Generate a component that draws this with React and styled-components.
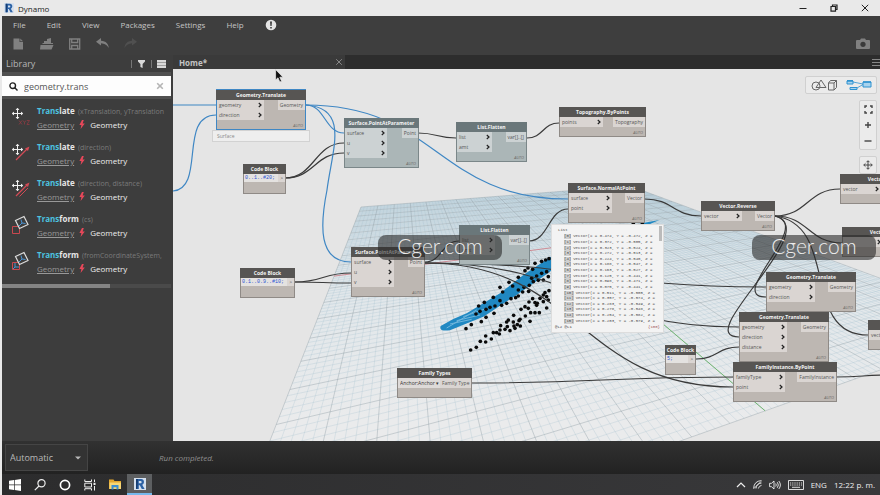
import React, { useState } from "react";
import styled, { createGlobalStyle, css } from "styled-components";

const GlobalStyle = createGlobalStyle`
  * {
    box-sizing: border-box;
  }
  body {
    margin: 0;
    background: #e9e9e9;
    font-family: "Open Sans", "Noto Sans", sans-serif;
  }
  button, input, select {
    font-family: inherit;
    border: 0;
    margin: 0;
    padding: 0;
    background: none;
    color: inherit;
    outline: none;
  }
`;

const Window = styled.div`
  position: relative;
  display: flex;
  flex-direction: column;
  height: 100vh;
  padding-left: 2px;
  overflow: hidden;
  background: #e9e9e9;
`;

const TitleBar = styled.header`
  display: flex;
  align-items: center;
  flex: none;
  height: 16px;
  padding-left: 2px;
  gap: 4px;
  font-size: 8px;
  color: #222;
`;

const WindowButtons = styled.div`
  display: flex;
  margin-left: auto;
`;

const WindowButton = styled.button`
  display: flex;
  align-items: center;
  justify-content: center;
  width: 31px;
  height: 16px;
  color: #222;
`;

const MenuBar = styled.nav`
  display: flex;
  align-items: center;
  flex: none;
  height: 17px;
  padding-left: 11px;
  gap: 21px;
  background: #3e3e3e;
`;

const MenuButton = styled.button`
  display: flex;
  font-size: 8px;
  line-height: 12px;
  color: #c4c4c4;
`;

const ToolBar = styled.div`
  display: flex;
  align-items: center;
  flex: none;
  height: 22px;
  padding: 0 10px;
  gap: 14px;
  background: #3e3e3e;
`;

const ToolButton = styled.button`
  display: flex;
  width: 14px;
  color: ${(p) => (p.$dim ? "#505050" : "#808080")};
  margin-left: ${(p) => (p.$end ? "auto" : "0")};
`;

const Main = styled.main`
  display: flex;
  flex: 1;
  min-height: 0;
`;

const Sidebar = styled.aside`
  flex: none;
  width: 171px;
  padding-right: 2px;
  background: #3d3d3d;
  overflow: hidden;
`;

const LibraryHead = styled.div`
  display: flex;
  align-items: center;
  height: 17px;
  padding: 0 5px 0 4px;
  font-size: 9px;
  color: #b5b5b5;
`;

const LibraryTools = styled.div`
  display: flex;
  align-items: center;
  gap: 5px;
  margin-left: auto;
  color: #d8d8d8;

  button {
    display: flex;
  }
`;

const Divider = styled.span`
  width: 1px;
  height: 8px;
  background: #777;
`;

const SearchBox = styled.label`
  display: flex;
  align-items: center;
  height: 27px;
  padding: 0 7px;
  gap: 6px;
  border-top: 4px solid #505050;
  border-bottom: 3px solid #505050;
  background: #fdfdfd;

  input {
    flex: 1;
    min-width: 0;
    font-size: 9px;
    color: #555;
  }
`;

const Results = styled.ul`
  margin: 0;
  padding: 5px 0 0;
  list-style: none;
`;

const Result = styled.li`
  display: flex;
  height: 36px;
  padding-left: 8px;
  gap: 7px;
  white-space: nowrap;

  svg {
    flex: none;
    margin-top: 3px;
  }
`;

const ResultName = styled.div`
  font-size: 8px;
  line-height: 13px;
  font-weight: 700;
  color: #e6e6e6;

  mark {
    background: none;
    color: #4cc3e0;
  }
  small {
    margin-left: 1px;
    font-size: 7px;
    font-weight: 400;
    color: #7a7a7a;
  }
`;

const ResultPath = styled.div`
  display: flex;
  align-items: center;
  gap: 5px;
  font-size: 8px;
  line-height: 13px;
  color: #eee;

  a {
    color: #999;
  }
  svg {
    margin: 0;
  }
`;

const ScrollTrack = styled.div`
  height: 4px;
  background: #4a4a4a;
`;

const ScrollThumb = styled.div`
  width: 64%;
  height: 4px;
  background: #848484;
`;

const Workspace = styled.section`
  display: flex;
  flex-direction: column;
  flex: 1;
  min-width: 0;
`;

const TabBar = styled.div`
  display: flex;
  align-items: center;
  justify-content: space-between;
  flex: none;
  height: 14px;
  background: #2d2d2d;
  color: #888;
`;

const Tab = styled.div`
  display: flex;
  align-items: center;
  justify-content: space-between;
  width: 172px;
  height: 14px;
  padding: 0 2px 0 6px;
  background: #3a3a3a;
  font-size: 8px;
  font-weight: 700;
  color: #c4c4c4;

  button {
    display: flex;
    color: #888;
  }
`;

const Canvas = styled.div`
  position: relative;
  flex: 1;
  overflow: hidden;
  background: #e5e5e5;
`;

/* panned graph space, nodes and wires share its coordinates */
const Graph = styled.div`
  position: absolute;
  left: -173px;
  top: -69px;
`;

const Scene = styled.svg`
  position: absolute;
  left: 0;
  top: 0;
  overflow: visible;
`;

const NodeBox = styled.article`
  position: absolute;
  left: ${(p) => p.$x}px;
  top: ${(p) => p.$y}px;
  width: ${(p) => p.$w}px;
  font-size: 5px;
  background: #bdb7b2;
  border: 1px solid #8f8a86;
  border-top: 0;
  color: #555;
  --head: #575553;
  --port: #dad5d2;
  ${(p) =>
    p.$kind === "frozen" &&
    css`
      background: #abb6b7;
      border-color: #7b8789;
      --head: #6a777a;
      --port: #ccd2d3;
    `}
  ${(p) =>
    p.$kind === "selected" &&
    css`
      border-color: #3f87c4;
      box-shadow: 0 -1px 0 #3f87c4;
    `}
`;

const NodeTitle = styled.h3`
  margin: 0 -1px;
  height: 10px;
  font-size: 5px;
  line-height: 10px;
  font-weight: 700;
  text-align: center;
  white-space: nowrap;
  background: var(--head);
  color: #f4f4f4;
`;

const NodeBody = styled.div`
  display: flex;
  justify-content: space-between;
  align-items: flex-start;
`;

const Inputs = styled.div`
  width: ${(p) => p.$w}px;
  flex: none;
  background: var(--port);
`;

const Port = styled.div`
  display: flex;
  align-items: center;
  justify-content: space-between;
  height: ${(p) => (p.$code ? 8 : 10)}px;
  padding: 0 2px;
  line-height: 7px;
  white-space: nowrap;
  background: var(--port);
`;

const NodeFoot = styled.div`
  height: ${(p) => (p.$tall ? 11 : 9)}px;
  padding: 2px 2px 0;
  font-size: 4px;
  line-height: 7px;
  font-style: italic;
  text-align: right;
  color: #6e6a67;
`;

const Code = styled.code`
  flex: 1;
  padding-left: 1px;
  font-family: "Liberation Mono", monospace;
  font-size: 5px;
  line-height: 8px;
  white-space: nowrap;
  background: #e4e2e0;
  color: #2c55d4;
`;

const TypeSelect = styled.select`
  appearance: none;
  height: 10px;
  width: 43px;
  padding-left: 2px;
  font-size: 5px;
  color: #333;
  background: #dedad8;
`;

const NodeHint = styled.div`
  position: absolute;
  left: 212px;
  top: 130px;
  width: 98px;
  height: 12px;
  padding-left: 4px;
  border: 1px solid #d2d2d2;
  background: #eee;
  font-size: 5px;
  line-height: 10px;
  color: #888;
`;

const Preview = styled.div`
  position: absolute;
  left: 551px;
  top: 224px;
  width: 113px;
  padding: 2px 6px 1px;
  background: #f3f3f3;
  border: 1px solid #ddd;
  font-family: "Liberation Mono", monospace;
  font-size: 4px;
  line-height: 7px;
  color: #4a4a4a;

  &::after {
    content: "";
    position: absolute;
    right: 1px;
    top: 1px;
    width: 3px;
    height: 15px;
    background: #bbb;
  }
`;

const PreviewRows = styled.ol`
  display: grid;
  grid-auto-rows: 1fr;
  height: 90px;
  margin: 0;
  padding: 0 0 0 6px;
  list-style: none;
`;

const PreviewRow = styled.li`
  display: flex;
  align-items: center;
  gap: 2px;
  line-height: 5px;
  white-space: nowrap;

  b {
    font-weight: 400;
    background: #cfcfcf;
  }
`;

const PreviewFoot = styled.div`
  display: flex;
  justify-content: space-between;
  margin: 0 -3px;
  color: #333;

  span:last-child {
    color: #9b5555;
  }
`;

const ViewControls = styled.div`
  position: absolute;
  top: 7px;
  right: 3px;
  display: flex;
  flex-direction: column;
  align-items: flex-end;
  gap: 6px;
`;

const ControlGroup = styled.div`
  display: flex;
  flex-direction: ${(p) => (p.$column ? "column" : "row")};
  background: #ebebeb;
  border: 1px solid #d0d0d0;
  border-radius: 2px;
`;

const ControlButton = styled.button`
  display: flex;
  align-items: center;
  justify-content: center;
  width: ${(p) => (p.$wide ? 35 : 16)}px;
  height: 16px;
  color: #555;

  & + & {
    border-left: ${(p) => (p.$wide ? "1px solid #d0d0d0" : "0")};
  }
`;

const RunBar = styled.footer`
  display: flex;
  align-items: center;
  flex: none;
  height: 33px;
  padding: 0 3px;
  gap: 71px;
  background: linear-gradient(#313131, #222);
`;

const RunMode = styled.label`
  position: relative;
  display: flex;
  align-items: center;

  select {
    appearance: none;
    width: 83px;
    height: 27px;
    padding-left: 4px;
    border: 1px solid #454545;
    background: #333;
    font-size: 9px;
    color: #b8b8b8;
  }
  svg {
    position: absolute;
    right: 7px;
    pointer-events: none;
  }
`;

const RunStatus = styled.output`
  font-size: 8px;
  font-style: italic;
  color: #8f8f8f;
`;

const TaskBar = styled.div`
  display: flex;
  align-items: center;
  justify-content: space-between;
  flex: none;
  height: 21px;
  background: linear-gradient(90deg, #2c2c2d, #39393b);
  color: #eee;
`;

const TaskButtons = styled.div`
  display: flex;
`;

const TaskButton = styled.button`
  display: flex;
  align-items: center;
  justify-content: center;
  width: 25px;
  height: 21px;
  ${(p) =>
    p.$active &&
    css`
      background: #5d5f61;
      border-bottom: 2px solid #76b9ed;
    `}
`;

const Tray = styled.div`
  display: flex;
  align-items: center;
  gap: 7px;
  padding-right: 5px;
  font-size: 8px;
  white-space: nowrap;
`;

const Watermark = styled.div`
  position: absolute;
  top: 235px;
  ${(p) => (p.$right ? "right: 4px;" : "left: 378px;")}
  width: 124px;
  height: 25px;
  border-radius: 8px;
  background: rgba(40, 40, 40, 0.6);
  font-family: Lato, sans-serif;
  font-size: 21px;
  font-weight: 300;
  line-height: 22px;
  text-align: center;
  color: #ececec;
`;

const Pointer = styled.svg`
  position: absolute;
  left: 275px;
  top: 69px;
`;

/* ground plane: unit square projected onto four corners */
const project = (u, v) => {
  const [x0, y0, x1, y1, x2, y2, x3, y3] = [361, 207, 630, 186, 1007, 325, 204, 610];
  const sx = x0 - x1 + x2 - x3;
  const sy = y0 - y1 + y2 - y3;
  const den = (x1 - x2) * (y3 - y2) - (x3 - x2) * (y1 - y2);
  const g = (sx * (y3 - y2) - (x3 - x2) * sy) / den;
  const h = ((x1 - x2) * sy - sx * (y1 - y2)) / den;
  const w = g * u + h * v + 1;
  const x = ((x1 - x0 + g * x1) * u + (x3 - x0 + h * x3) * v + x0) / w;
  const y = ((y1 - y0 + g * y1) * u + (y3 - y0 + h * y3) * v + y0) / w;
  return `${x.toFixed(1)} ${y.toFixed(1)}`;
};

const gridPath = (count, skip) => {
  let d = "";
  for (let i = 0; i <= count; i++) {
    if (skip && i % skip === 0) continue;
    const t = i / count;
    d += `M${project(t, 0)}L${project(t, 1)}M${project(0, t)}L${project(1, t)}`;
  }
  return d;
};

const DOTS = [
  236, 318, 253, 307, 280, 292, 308, 276, 300, 262, 327, 247, 338, 258, 355, 232, 375, 212, 384,
  204, 398, 208, 405, 190, 425, 184, 437, 180, 447, 176, 198, 386, 214, 374, 244, 365, 258, 352,
  282, 340, 228, 342, 240, 334, 258, 328, 305, 316, 320, 310, 333, 296, 347, 293, 355, 288, 355,
  270, 368, 276, 386, 274, 372, 262, 388, 256, 400, 245, 415, 241, 430, 240, 445, 230, 440, 215,
  425, 220, 410, 228, 395, 235, 285, 318, 270, 322, 300, 302, 212, 450, 229, 442, 241, 424, 257,
  426, 257, 408, 274, 417, 280, 398, 290, 398, 298, 402, 300, 390, 302, 377, 315, 388, 322, 380,
  330, 392, 320, 366, 325, 360, 342, 378, 340, 366, 341, 346, 345, 385, 352, 374, 357, 362, 361,
  378, 360, 358, 363, 328, 376, 348, 390, 364, 375, 320, 385, 325, 387, 306, 392, 338, 405, 338,
  418, 338, 410, 316, 405, 308, 398, 296, 420, 295, 412, 310, 430, 305, 440, 324, 440, 290, 430,
  285, 445, 300, 435, 278, 447, 272, 700, 71, 727, 69,
];

const wire = (x1, y1, x2, y2) => {
  const m = (x1 + x2) / 2;
  return `M${x1} ${y1}C${m} ${y1} ${m} ${y2} ${x2} ${y2}`;
};

const BLUE_WIRES = [
  "M173 105H216",
  "M216 115C178 115 206 188 173 191",
  wire(306, 105, 344, 133),
  "M306 105C350 108 332 150 327 190C320 225 318 262 351 262",
  wire(306, 105, 568, 199),
];

const WIRES = [
  wire(285, 178, 344, 143),
  wire(285, 178, 344, 153),
  wire(418, 133, 456, 138),
  wire(527, 138, 559, 123),
  wire(295, 282, 351, 273),
  wire(295, 282, 351, 283),
  wire(425, 262, 459, 241),
  wire(425, 263, 766, 287),
  wire(425, 263, 740, 327),
  wire(425, 263, 733, 387),
  wire(529, 241, 568, 209),
  wire(645, 199, 701, 216),
  wire(775, 216, 840, 189),
  wire(775, 216, 842, 243),
  "M775 216C815 225 725 297 766 297",
  "M775 216C825 230 690 337 739 337",
  "M775 216C840 225 800 335 868 335",
  wire(471, 383, 733, 377),
  wire(836, 377, 890, 375),
  wire(696, 359, 739, 347),
];

const NODES = [
  { title: "Geometry.Translate", x: 216, y: 90, w: 90, inW: 47, ins: ["geometry", "direction"], out: "Geometry", kind: "selected" },
  { title: "Surface.PointAtParameter", x: 344, y: 118, w: 75, inW: 42, ins: ["surface", "u", "v"], out: "Point", kind: "frozen" },
  { title: "List.Flatten", x: 456, y: 122, w: 71, inW: 35, ins: ["list", "amt"], out: "var[]..[]", kind: "frozen" },
  { title: "Topography.ByPoints", x: 559, y: 107, w: 87, inW: 43, ins: ["points"], out: "Topography" },
  { title: "Surface.NormalAtPoint", x: 568, y: 183, w: 77, inW: 43, ins: ["surface", "point"], out: "Vector" },
  { title: "Vector.Reverse", x: 701, y: 201, w: 74, inW: 40, ins: ["vector"], out: "Vector" },
  { title: "Vector.Scale", x: 840, y: 174, w: 86, inW: 40, ins: ["vector"], out: "" },
  { title: "Vector.Scale", x: 842, y: 227, w: 86, inW: 40, ins: [""], out: "" },
  { title: "List.Flatten", x: 459, y: 225, w: 71, inW: 35, ins: ["list", "amt"], out: "var[]..[]", kind: "frozen" },
  { title: "Surface.PointAtParameter", x: 351, y: 247, w: 74, inW: 42, ins: ["surface", "u", "v"], out: "Point" },
  { title: "Geometry.Translate", x: 766, y: 272, w: 90, inW: 48, ins: ["geometry", "direction"], out: "Geometry" },
  { title: "Geometry.Translate", x: 739, y: 312, w: 90, inW: 47, ins: ["geometry", "direction", "distance"], out: "Geometry" },
  { title: "FamilyInstance.ByPoint", x: 733, y: 362, w: 104, inW: 51, ins: ["familyType", "point"], out: "FamilyInstance" },
  { title: "", x: 868, y: 320, w: 78, inW: 40, ins: ["vector"], out: "" },
];

const CODE_BLOCKS = [
  { x: 243, y: 164, w: 43, code: "0..1..#20;" },
  { x: 240, y: 268, w: 55, code: "0.1..0.9..#10;" },
  { x: 665, y: 345, w: 31, code: "5;" },
];

const VECTORS = [
  ["0.474", "0.472"],
  ["0.372", "0.505"],
  ["0.323", "0.524"],
  ["0.272", "0.513"],
  ["0.224", "0.540"],
  ["0.188", "0.547"],
  ["0.163", "0.527"],
  ["0.125", "0.441"],
  ["0.098", "0.471"],
  ["0.075", "0.441"],
  ["0.511", "0.505"],
  ["0.357", "0.574"],
  ["0.283", "0.549"],
  ["0.278", "0.548"],
  ["0.254", "0.582"],
  ["0.203", "0.579"],
];

const RESULTS = [
  { rest: "late", args: "(xTranslation, yTranslation", icon: "xyz" },
  { rest: "late", args: "(direction)", icon: "arrow" },
  { rest: "late", args: "(direction, distance)", icon: "arrows" },
  { rest: "form", args: "(cs)", icon: "cs" },
  { rest: "form", args: "(fromCoordinateSystem,", icon: "from" },
];

const Chevron = () => (
  <svg width="4" height="6" viewBox="0 0 4 6">
    <path d="M.8 1L3 3L.8 5" fill="none" stroke="#222" strokeWidth="1.2" />
  </svg>
);

const RevitLogo = ({ size }) => (
  <svg width={size} height={size} viewBox="0 0 12 12">
    <path d="M0 0H12V12H0z" fill="#d5e0ee" />
    <path
      d="M2 1H7.2C10.6 1 10.8 6 8.2 6.8L10.6 11H7.8L5.8 7.2H4.8V11H2zM4.8 3V5.3H6.6C8 5.3 8 3 6.6 3z"
      fill="#2c62a5"
      fillRule="evenodd"
    />
    <path d="M2 1H4L3.4 11H2z" fill="#163d73" />
  </svg>
);

const ResultIcon = ({ kind }) => {
  if (kind === "cs" || kind === "from") {
    return (
      <svg width="20" height="20" viewBox="0 0 20 20" fill="none">
        <path d="M2.5 11.5H9.5V18.5H2.5z" stroke="#c9484f" />
        {kind === "from" && <path d="M5 12V16H9M5 16L3 18" stroke="#4a94d4" />}
        <path d="M5.5 5.5L14 1.5L18 9.5L9.5 13.5z" fill="#3d3d3d" stroke="#ddd" strokeWidth="1.2" />
        <path d="M11 4.5L12 8L15.5 8.5M12 8L9 11" stroke="#4a94d4" />
      </svg>
    );
  }
  return (
    <svg width="20" height="20" viewBox="0 0 20 20" fill="none">
      {kind === "xyz" && (
        <path
          d="M9 13.5L12 17.5M12 13.5L9 17.5M13 13.5L14.5 15.5L16 13.5M14.5 15.5V17.5M17 13.5H19.5L17 17.5H19.5"
          stroke="#8e3b42"
          strokeWidth=".8"
        />
      )}
      {kind !== "xyz" && (
        <>
          <path d="M6 17L17 6" stroke="#d24a55" strokeWidth="1.2" />
          <path d="M15 5.5L19.5 3.5L18 8z" fill="#d24a55" />
        </>
      )}
      {kind === "arrows" && <path d="M9.5 17.5L18 9" stroke="#d24a55" />}
      <path
        d="M7.5 1.5V11.5M2.5 6.5H12.5M6 3L7.5 1.2L9 3M6 10L7.5 11.8L9 10M4 5L2.2 6.5L4 8M11 5L12.8 6.5L11 8"
        stroke="#f0f0f0"
      />
    </svg>
  );
};

const Bolt = () => (
  <svg width="6" height="9" viewBox="0 0 6 9">
    <path d="M3 0L.4 5H2.4L1.6 9L5.8 3.6H3.6L4.8 0z" fill="#e8485a" />
  </svg>
);

const Node = ({ title, x, y, w, inW, ins, out, kind }) => (
  <NodeBox $x={x} $y={y} $w={w} $kind={kind}>
    <NodeTitle>{title}</NodeTitle>
    <NodeBody>
      <Inputs $w={inW}>
        {ins.map((name, i) => (
          <Port key={i}>
            <span>{name}</span>
            <Chevron />
          </Port>
        ))}
      </Inputs>
      {out && <Port>{out}</Port>}
    </NodeBody>
    <NodeFoot>{x < 840 && "AUTO"}</NodeFoot>
  </NodeBox>
);

const CodeBlock = ({ x, y, w, code }) => (
  <NodeBox $x={x} $y={y} $w={w}>
    <NodeTitle>Code Block</NodeTitle>
    <NodeBody>
      <Code>
        {code}
      </Code>
      <Port $code>&gt;</Port>
    </NodeBody>
    <NodeFoot $tall />
  </NodeBox>
);

const Ground = () => (
  <>
    <defs>
      <linearGradient id="ground" gradientUnits="userSpaceOnUse" x1="0" y1="186" x2="0" y2="420">
        <stop offset="0" stopColor="#cddce4" />
        <stop offset=".35" stopColor="#dfe6ea" />
        <stop offset="1" stopColor="#eaebec" />
      </linearGradient>
    </defs>
    <path d={`M${project(0, 0)}L${project(1, 0)}L${project(1, 1)}L${project(0, 1)}z`} fill="url(#ground)" />
    <g fill="none">
      <path d={gridPath(100, 5)} stroke="#a9c2d0" strokeWidth=".5" opacity=".6" />
      <path d={gridPath(20)} stroke="#8b9aa3" strokeWidth=".6" opacity=".65" />
      <path d={`M${project(0, 0.5)}L${project(0.5, 0.5)}`} stroke="#dd6a75" strokeWidth=".6" />
      <path d={`M${project(0.5, 0.5)}L${project(0.5, 1)}`} stroke="#5db35d" strokeWidth=".8" />
    </g>
  </>
);

const Surface = () => (
  <g transform="translate(400 200) scale(.3333)">
    <path d="M122 378Q160 355 200 340L300 280L370 225L450 172L540 130L450 215L350 285L250 350L150 391Q115 395 122 378z" fill="#2088c2" />
    <path d="M140 384L230 330M150 372L215 358M170 362L240 345M190 350L260 325" stroke="#6fb6dc" strokeWidth="3" />
    <path d="M690 80L725 70L778 60L745 74z" fill="#2088c2" />
    {DOTS.map((v, i) => i % 2 === 0 && <circle key={i} cx={v} cy={DOTS[i + 1]} r="5.5" fill="#0a0a0a" />)}
  </g>
);

const ListPreview = () => (
  <Preview>
    <div>List</div>
    <PreviewRows>
      {VECTORS.map(([x, y], i) => (
        <PreviewRow key={i}>
          <b>[{i}]</b>
          <span>
            Vector(X = {x}, Y = -{y}, Z =
          </span>
        </PreviewRow>
      ))}
    </PreviewRows>
    <PreviewFoot>
      <span>@L2 @L1</span>
      <span>{"{100}"}</span>
    </PreviewFoot>
  </Preview>
);

const Library = () => {
  const [query, setQuery] = useState("geometry.trans");

  return (
    <Sidebar>
      <LibraryHead>
        Library
        <LibraryTools>
          <Divider />
          <button aria-label="Filter">
            <svg width="9" height="8" viewBox="0 0 9 8">
              <path d="M1 0H8V1.5L5.6 4V8L3.4 7V4L1 1.5z" fill="currentColor" />
            </svg>
          </button>
          <Divider />
          <button aria-label="View">
            <svg width="9" height="8" viewBox="0 0 9 8">
              <path d="M0 0H9V8H0z" fill="currentColor" />
              <path d="M0 2.5H9M0 5.5H9" stroke="#777" strokeWidth=".6" />
            </svg>
          </button>
        </LibraryTools>
      </LibraryHead>
      <SearchBox>
        <svg width="9" height="9" viewBox="0 0 9 9" fill="none" stroke="#222" strokeWidth="1.4">
          <circle cx="3.7" cy="3.7" r="2.8" />
          <path d="M5.8 5.8L8.5 8.5" />
        </svg>
        <input aria-label="Search" value={query} onChange={(e) => setQuery(e.target.value)} />
        <svg width="8" height="8" viewBox="0 0 8 8" stroke="#b4b4b4" strokeWidth="1.6">
          <path d="M1.2 1.2L6.8 6.8M6.8 1.2L1.2 6.8" />
        </svg>
      </SearchBox>
      <Results>
        {RESULTS.map((r) => (
          <Result key={r.args}>
            <ResultIcon kind={r.icon} />
            <div>
              <ResultName>
                <mark>Trans</mark>
                {r.rest} <small>{r.args}</small>
              </ResultName>
              <ResultPath>
                <a href="#geometry">Geometry</a>
                <Bolt />
                <span>Geometry</span>
              </ResultPath>
            </div>
          </Result>
        ))}
      </Results>
      <ScrollTrack>
        <ScrollThumb />
      </ScrollTrack>
    </Sidebar>
  );
};

const GraphCanvas = () => (
  <Canvas>
    <Graph>
      <Scene width="880" height="495">
        <Ground />
        <Surface />
        <g fill="none" strokeWidth="1.2">
          {WIRES.map((d) => (
            <path key={d} d={d} stroke="#3a3a3a" />
          ))}
          {BLUE_WIRES.map((d) => (
            <path key={d} d={d} stroke="#3f87c4" />
          ))}
        </g>
      </Scene>
      {NODES.map((n, i) => (
        <Node key={i} {...n} />
      ))}
      {CODE_BLOCKS.map((n) => (
        <CodeBlock key={n.code} {...n} />
      ))}
      <NodeBox $x={397} $y={368} $w={75}>
        <NodeTitle>Family Types</NodeTitle>
        <NodeBody>
          <TypeSelect aria-label="Family type">
            <option>Anchor:Anchor ▾</option>
          </TypeSelect>
          <Port>Family Type</Port>
        </NodeBody>
        <NodeFoot />
      </NodeBox>
      <NodeHint>Surface</NodeHint>
      <ListPreview />
    </Graph>
    <ViewControls>
      <ControlGroup>
        <ControlButton $wide aria-label="3D view">
          <svg width="26" height="12" viewBox="0 0 26 12" fill="none" stroke="#666">
            <circle cx="5" cy="7" r="4" />
            <path d="M10 1L15 8.5H5zM17.5 4H23V11H17.5zM17.5 4L19.5 1.5H25.5V8.5L23 11M23 4L25.5 1.5" />
          </svg>
        </ControlButton>
        <ControlButton $wide aria-label="Graph view">
          <svg width="26" height="12" viewBox="0 0 26 12" fill="none" stroke="#2f92d0">
            <path d="M1 2H7V5H1zM4 8.5H11V10.5H4zM17 3H25V8H17z" fill="#a8d3ee" />
            <path d="M1 1.8H7M17 3H25" strokeWidth="1.6" />
            <path d="M7 3L17 5M11 9L17 5.5" strokeWidth=".8" />
          </svg>
        </ControlButton>
      </ControlGroup>
      <ControlGroup $column>
        <ControlButton aria-label="Fit">
          <svg width="9" height="9" viewBox="0 0 9 9" fill="none" stroke="#444" strokeWidth="1.4">
            <path d="M1 3V1H3M6 1H8V3M8 6V8H6M3 8H1V6" />
          </svg>
        </ControlButton>
        <ControlButton aria-label="Zoom in">
          <svg width="8" height="8" viewBox="0 0 8 8" stroke="#444" strokeWidth="1.4">
            <path d="M1 4H7M4 1V7" />
          </svg>
        </ControlButton>
        <ControlButton aria-label="Zoom out">
          <svg width="8" height="8" viewBox="0 0 8 8" stroke="#444" strokeWidth="1.4">
            <path d="M.5 4H7.5" />
          </svg>
        </ControlButton>
      </ControlGroup>
      <ControlGroup>
        <ControlButton aria-label="Pan">
          <svg width="10" height="10" viewBox="0 0 10 10" fill="none" stroke="#444">
            <path d="M5 1V9M1 5H9M3.5 2.2L5 .7L6.5 2.2M3.5 7.8L5 9.3L6.5 7.8M2.2 3.5L.7 5L2.2 6.5M7.8 3.5L9.3 5L7.8 6.5" />
          </svg>
        </ControlButton>
      </ControlGroup>
    </ViewControls>
  </Canvas>
);

const App = () => {
  const menus = ["File", "Edit", "View", "Packages", "Settings", "Help"];

  return (
    <Window>
      <GlobalStyle />
      <TitleBar>
        <RevitLogo size={10} />
        Dynamo
        <WindowButtons>
          <WindowButton aria-label="Minimize">
            <svg width="8" height="8" viewBox="0 0 8 8" stroke="currentColor">
              <path d="M.5 4.5H7.5" />
            </svg>
          </WindowButton>
          <WindowButton aria-label="Restore">
            <svg width="8" height="8" viewBox="0 0 8 8" fill="none" stroke="currentColor" strokeWidth="1.2">
              <path d="M1 2.5H5.5V7.2H1zM2.5 2.5V1H7V5.5H5.5" />
            </svg>
          </WindowButton>
          <WindowButton aria-label="Close">
            <svg width="8" height="8" viewBox="0 0 8 8" stroke="currentColor">
              <path d="M.8 .8L7.2 7.2M7.2 .8L.8 7.2" />
            </svg>
          </WindowButton>
        </WindowButtons>
      </TitleBar>
      <MenuBar>
        {menus.map((name) => (
          <MenuButton key={name}>{name}</MenuButton>
        ))}
        <MenuButton aria-label="Notifications">
          <svg width="12" height="12" viewBox="0 0 12 12">
            <circle cx="6" cy="6" r="5.3" fill="#e4e4e4" />
            <path d="M5 2.5H7L6.6 7H5.4zM5.2 8H6.8V9.5H5.2z" fill="#3e3e3e" />
          </svg>
        </MenuButton>
      </MenuBar>
      <ToolBar>
        <ToolButton aria-label="New">
          <svg width="13" height="12" viewBox="0 0 13 12">
            <path d="M1.5 .5H7.5V4H11V11.5H1.5zM8.3 .5L11 3.2H8.3z" fill="currentColor" />
          </svg>
        </ToolButton>
        <ToolButton aria-label="Open">
          <svg width="14" height="12" viewBox="0 0 14 12" fill="currentColor">
            <path d="M4 5V3H7V1L11 0V5H13V6H2.5V5zM.5 7H13.5L11.5 11.5H0z" />
          </svg>
        </ToolButton>
        <ToolButton aria-label="Save">
          <svg width="13" height="12" viewBox="0 0 13 12" fill="none" stroke="currentColor" strokeWidth="1.3">
            <path d="M1.7 1H11.7V11H1.7zM3.7 1V4.5H9.7V1M3.7 11V7.5H9.7V11" />
          </svg>
        </ToolButton>
        <ToolButton aria-label="Undo">
          <svg width="14" height="12" viewBox="0 0 14 12">
            <path d="M0 3.8L5 0V2.8C10 3 12.5 6 12.8 10C10.5 6.5 8.5 5.5 5 5.2V7.5z" fill="currentColor" />
          </svg>
        </ToolButton>
        <ToolButton $dim aria-label="Redo">
          <svg width="14" height="12" viewBox="0 0 14 12">
            <path d="M13 3.8L8 0V2.8C3 3 .8 6 .5 10C2.8 6.5 4.8 5.5 8 5.2V7.5z" fill="currentColor" />
          </svg>
        </ToolButton>
        <ToolButton $end aria-label="Export image">
          <svg width="14" height="12" viewBox="0 0 14 12">
            <path d="M0 3Q0 2 1 2H4L5 .5H9L10 2H13Q14 2 14 3V10Q14 11 13 11H1Q0 11 0 10z" fill="currentColor" />
            <circle cx="7" cy="6.3" r="2.6" fill="#3a3a3a" />
          </svg>
        </ToolButton>
      </ToolBar>
      <Main>
        <Library />
        <Workspace>
          <TabBar>
            <Tab>
              Home*
              <button aria-label="Close tab">
                <svg width="8" height="8" viewBox="0 0 8 8" stroke="currentColor">
                  <path d="M1.2 1.2L6.8 6.8M6.8 1.2L1.2 6.8" />
                </svg>
              </button>
            </Tab>
            <svg width="8" height="8" viewBox="0 0 8 8" stroke="currentColor">
              <path d="M0 1.5H8M0 4.5H8M0 7.5H8" />
            </svg>
          </TabBar>
          <GraphCanvas />
        </Workspace>
      </Main>
      <RunBar>
        <RunMode>
          <select aria-label="Run mode">
            <option>Automatic</option>
            <option>Manual</option>
          </select>
          <svg width="6" height="4" viewBox="0 0 6 4">
            <path d="M0 .5H6L3 3.5z" fill="#b8b8b8" />
          </svg>
        </RunMode>
        <RunStatus>Run completed.</RunStatus>
      </RunBar>
      <TaskBar>
        <TaskButtons>
          <TaskButton aria-label="Start">
            <svg width="12" height="12" viewBox="0 0 12 12" fill="#fff">
              <path d="M0 1.7L5 1V5.6H0zM5.7 .9L12 0V5.6H5.7zM0 6.3H5V11L0 10.3zM5.7 6.3H12V12L5.7 11.1z" />
            </svg>
          </TaskButton>
          <TaskButton aria-label="Search">
            <svg width="12" height="12" viewBox="0 0 12 12" fill="none" stroke="#eee" strokeWidth="1.2">
              <circle cx="7.5" cy="4.3" r="3.6" />
              <path d="M5 7L.8 11.2" />
            </svg>
          </TaskButton>
          <TaskButton aria-label="Cortana">
            <svg width="12" height="12" viewBox="0 0 12 12" fill="none" stroke="#fff" strokeWidth="1.7">
              <circle cx="6" cy="6" r="4.6" />
            </svg>
          </TaskButton>
          <TaskButton aria-label="Task view">
            <svg width="12" height="12" viewBox="0 0 12 12" fill="none" stroke="#eee">
              <path d="M.8 .5V2.5H7.5V.5M.8 4.2H7.5V8H.8zM.8 11.5V9.7H7.5V11.5M10.5 .5V3M10.5 7V11.5" />
              <path d="M10.5 3.8V6" strokeWidth="2" />
            </svg>
          </TaskButton>
          <TaskButton aria-label="File Explorer">
            <svg width="12" height="11" viewBox="0 0 12 11">
              <path d="M0 .5H4.5L5.5 2H12V10H0z" fill="#e3a72f" />
              <path d="M.5 3.5H12V10H.5z" fill="#f8d775" />
              <path d="M2.5 10.5V6H9.5V10.5H7.5V8.3H4.5V10.5z" fill="#3d8fd0" />
            </svg>
          </TaskButton>
          <TaskButton $active aria-label="Revit">
            <RevitLogo size={12} />
          </TaskButton>
        </TaskButtons>
        <Tray>
          <svg width="10" height="6" viewBox="0 0 10 6" fill="none" stroke="#eee" strokeWidth="1.2">
            <path d="M1 5L5 1L9 5" />
          </svg>
          <svg width="9" height="9" viewBox="0 0 9 9" fill="none" stroke="#ddd">
            <path d="M.6 8.5Q1 1 8.5 .6M3 8.5Q3.3 3.5 8.5 3M5.4 8.5Q5.8 5.8 8.5 5.4M1 8.5L8 1.5" />
          </svg>
          <svg width="12" height="10" viewBox="0 0 12 10" fill="none" stroke="#eee" strokeWidth=".9">
            <path d="M.6 3.3H2.5L5 1V9L2.5 6.7H.6zM6.7 3.5Q7.8 5 6.7 6.5M8.3 2.2Q10.4 5 8.3 7.8M9.8 1Q13 5 9.8 9" />
          </svg>
          <svg width="16" height="10" viewBox="0 0 16 10" fill="none" stroke="#eee" strokeWidth=".9">
            <path d="M.5 .5H15.5V9.5H.5z" />
            <path d="M2 3H14M2 5H14" strokeDasharray="1.2 1" />
            <path d="M4 7.3H12" />
          </svg>
          <span>ENG</span>
          <time>12:22 p. m.</time>
        </Tray>
      </TaskBar>
      <Watermark>Cger.com</Watermark>
      <Watermark $right>Cger.com</Watermark>
      <Pointer width="9" height="14" viewBox="0 0 9 14">
        <path d="M.6 .6V11L3 8.8L4.8 13L6.6 12.2L4.8 8.2H8z" fill="#111" stroke="#eee" strokeWidth=".7" />
      </Pointer>
    </Window>
  );
};

export default App;
